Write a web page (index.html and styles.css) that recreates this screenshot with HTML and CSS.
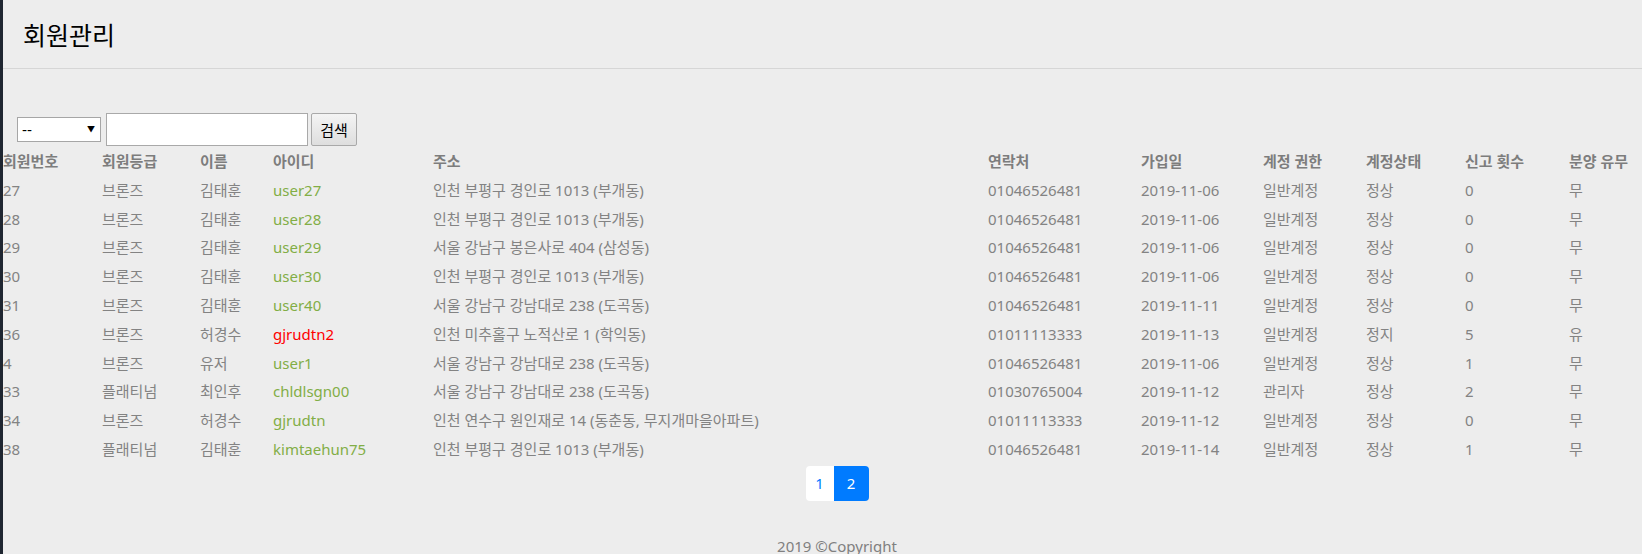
FILE: index.html
```html
<!DOCTYPE html>
<html lang="ko">
<head>
<meta charset="utf-8">
<title>회원관리</title>
<link rel="stylesheet" href="styles.css">
</head>
<body>
<div class="page">
  <header class="header">
    <h1 class="title">회원관리</h1>
  </header>
  <form class="search">
    <span class="select-wrap">
      <select class="select"><option>--</option></select>
      <span class="select-arrow">▼</span>
    </span>
    <input class="text-input" type="text">
    <button class="btn" type="button">검색</button>
  </form>
  <table class="members">
    <colgroup>
      <col class="c1"><col class="c2"><col class="c3"><col class="c4"><col class="c5"><col class="c6"><col class="c7"><col class="c8"><col class="c9"><col class="c10"><col class="c11">
    </colgroup>
    <thead>
      <tr><th>회원번호</th><th>회원등급</th><th>이름</th><th>아이디</th><th>주소</th><th>연락처</th><th>가입일</th><th>계정 권한</th><th>계정상태</th><th>신고 횟수</th><th>분양 유무</th></tr>
    </thead>
    <tbody>
      <tr><td>27</td><td>브론즈</td><td>김태훈</td><td><a class="uid">user27</a></td><td>인천 부평구 경인로 1013 (부개동)</td><td>01046526481</td><td>2019-11-06</td><td>일반계정</td><td>정상</td><td>0</td><td>무</td></tr>
      <tr><td>28</td><td>브론즈</td><td>김태훈</td><td><a class="uid">user28</a></td><td>인천 부평구 경인로 1013 (부개동)</td><td>01046526481</td><td>2019-11-06</td><td>일반계정</td><td>정상</td><td>0</td><td>무</td></tr>
      <tr><td>29</td><td>브론즈</td><td>김태훈</td><td><a class="uid">user29</a></td><td>서울 강남구 봉은사로 404 (삼성동)</td><td>01046526481</td><td>2019-11-06</td><td>일반계정</td><td>정상</td><td>0</td><td>무</td></tr>
      <tr><td>30</td><td>브론즈</td><td>김태훈</td><td><a class="uid">user30</a></td><td>인천 부평구 경인로 1013 (부개동)</td><td>01046526481</td><td>2019-11-06</td><td>일반계정</td><td>정상</td><td>0</td><td>무</td></tr>
      <tr><td>31</td><td>브론즈</td><td>김태훈</td><td><a class="uid">user40</a></td><td>서울 강남구 강남대로 238 (도곡동)</td><td>01046526481</td><td>2019-11-11</td><td>일반계정</td><td>정상</td><td>0</td><td>무</td></tr>
      <tr><td>36</td><td>브론즈</td><td>허경수</td><td><a class="uid uid-red">gjrudtn2</a></td><td>인천 미추홀구 노적산로 1 (학익동)</td><td>01011113333</td><td>2019-11-13</td><td>일반계정</td><td>정지</td><td>5</td><td>유</td></tr>
      <tr><td>4</td><td>브론즈</td><td>유저</td><td><a class="uid">user1</a></td><td>서울 강남구 강남대로 238 (도곡동)</td><td>01046526481</td><td>2019-11-06</td><td>일반계정</td><td>정상</td><td>1</td><td>무</td></tr>
      <tr><td>33</td><td>플래티넘</td><td>최인후</td><td><a class="uid">chldlsgn00</a></td><td>서울 강남구 강남대로 238 (도곡동)</td><td>01030765004</td><td>2019-11-12</td><td>관리자</td><td>정상</td><td>2</td><td>무</td></tr>
      <tr><td>34</td><td>브론즈</td><td>허경수</td><td><a class="uid">gjrudtn</a></td><td>인천 연수구 원인재로 14 (동춘동, 무지개마을아파트)</td><td>01011113333</td><td>2019-11-12</td><td>일반계정</td><td>정상</td><td>0</td><td>무</td></tr>
      <tr><td>38</td><td>플래티넘</td><td>김태훈</td><td><a class="uid">kimtaehun75</a></td><td>인천 부평구 경인로 1013 (부개동)</td><td>01046526481</td><td>2019-11-14</td><td>일반계정</td><td>정상</td><td>1</td><td>무</td></tr>
    </tbody>
  </table>
  <nav class="pagination">
    <a class="page-link page-one">1</a>
    <a class="page-link page-active">2</a>
  </nav>
  <footer class="footer">2019 ©Copyright</footer>
</div>
</body>
</html>
```

FILE: styles.css
```css
html, body {
  margin: 0;
  padding: 0;
}
body {
  background: #ededed;
  border-left: 3px solid #1f2631;
  overflow-x: hidden;
  min-height: 554px;
  font-family: "Noto Sans", "Noto Sans CJK KR", sans-serif;
  font-size: 15px;
  color: #808080;
}
.page {
  width: 1668px;
}
.header {
  height: 69px;
  border-bottom: 1px solid #d6d6d6;
  display: flex;
  align-items: center;
  padding-left: 20px;
  box-sizing: border-box;
}
.title {
  margin: 0;
  font-family: "Noto Sans CJK KR", sans-serif;
  font-weight: 400;
  font-size: 25px;
  color: #000;
  line-height: 1;
}
.search {
  display: flex;
  align-items: center;
  margin: 44px 0 0 14px;
  height: 33px;
}
.select-wrap {
  position: relative;
  display: inline-block;
  width: 84px;
  height: 25px;
}
.select {
  appearance: none;
  -webkit-appearance: none;
  width: 84px;
  height: 25px;
  margin: 0;
  border: 1px solid #a6a6a6;
  border-radius: 0;
  background: #fff;
  padding: 0 0 0 4px;
  font-family: "Liberation Sans", sans-serif;
  font-size: 15px;
  color: #000;
}
.select-arrow {
  position: absolute;
  right: 6px;
  top: 7px;
  font-size: 8px;
  line-height: 10px;
  color: #000;
  pointer-events: none;
}
.text-input {
  margin: 0 0 0 5px;
  width: 202px;
  height: 33px;
  box-sizing: border-box;
  border: 1px solid #a9a9a9;
  background: #fff;
  padding: 0 4px;
}
.btn {
  margin: 0 0 0 3px;
  width: 46px;
  height: 33px;
  box-sizing: border-box;
  border: 1px solid #a9a9a9;
  border-radius: 2px;
  background: linear-gradient(#f4f4f4, #dedede);
  font-family: "Noto Sans CJK KR", sans-serif;
  font-size: 15px;
  color: #000;
  padding: 0;
}
.members {
  width: 1668px;
  table-layout: fixed;
  border-collapse: collapse;
  margin-top: 1px;
}
.c1 { width: 99px; }
.c2 { width: 98px; }
.c3 { width: 73px; }
.c4 { width: 160px; }
.c5 { width: 555px; }
.c6 { width: 153px; }
.c7 { width: 122px; }
.c8 { width: 103px; }
.c9 { width: 99px; }
.c10 { width: 104px; }
.c11 { width: 102px; }
.members th,
.members td {
  padding: 0;
  text-align: left;
  height: 28.8px;
  line-height: 28.8px;
  white-space: nowrap;
  font-size: 15px;
}
.members th {
  font-weight: 700;
  color: #7d7d7d;
}
.members td {
  color: #838383;
}
.uid {
  color: #82ae46;
  text-decoration: none;
}
.uid-red {
  color: #ff0000;
}
.pagination {
  display: flex;
  justify-content: center;
  margin-top: 2px;
}
.page-link {
  display: flex;
  align-items: center;
  justify-content: center;
  height: 35px;
  font-size: 15px;
  text-decoration: none;
}
.page-one {
  width: 28px;
  background: #fff;
  color: #007bff;
  border-radius: 4px 0 0 4px;
}
.page-active {
  width: 35px;
  background: #007bff;
  color: #fff;
  border-radius: 0 4px 4px 0;
}
.footer {
  text-align: center;
  margin-top: 34px;
  font-size: 15px;
  color: #808080;
  line-height: 22px;
}
```
